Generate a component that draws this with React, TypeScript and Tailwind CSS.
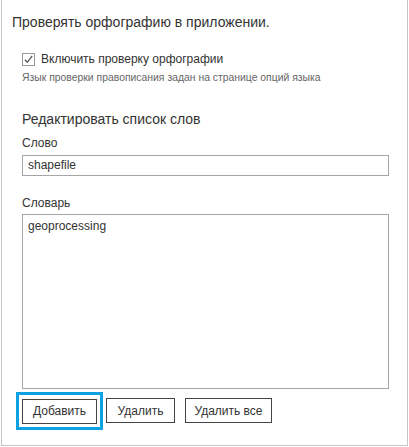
import React from "react";

export default function App() {
  return (
    <div
      className="w-[409px] h-[447px] bg-white text-[#333] overflow-hidden"
      style={{ fontFamily: '"Liberation Sans", Arial, sans-serif' }}
    >
      <div className="ml-px w-[407px] h-[446px] border-x border-b border-[#c6c6c6] flex flex-col">
        <h1 className="mt-[11px] ml-[10px] text-[14px] leading-[22px] text-[#333]">
          Проверять орфографию в приложении.
        </h1>

        <div className="mt-[18px] ml-[20px] flex flex-col">
          <label className="flex items-center gap-[6px] text-[12px] leading-[16px]">
            <span className="w-[13px] h-[13px] border border-[#9a9a9a] bg-white flex items-center justify-center">
              <svg width="11" height="11" viewBox="0 0 11 11">
                <path d="M2 5.8 L4.3 8.3 L9.2 1.8" fill="none" stroke="#555" strokeWidth="1.3" />
              </svg>
            </span>
            <span>Включить проверку орфографии</span>
          </label>
          <p className="mt-[4px] text-[10.4px] leading-[14px] text-[#666]">
            Язык проверки правописания задан на странице опций языка
          </p>
        </div>

        <div className="mt-[24px] ml-[20px] w-[367px] flex flex-col">
          <h2 className="text-[14px] leading-[20px]">Редактировать список слов</h2>
          <div className="mt-[6px] text-[12px] leading-[16px]">Слово</div>
          <div className="mt-[4px] h-[21px] border border-[#a6a6a6] px-[5px] text-[12px] leading-[19px]">
            shapefile
          </div>
          <div className="mt-[19px] text-[12px] leading-[16px]">Словарь</div>
          <div className="mt-[3px] h-[175px] border border-[#a6a6a6] px-[5px] pt-[2px] text-[12px] leading-[18px]">
            geoprocessing
          </div>
        </div>

        <div className="mt-[3px] ml-[14px] flex items-start">
          <div className="border-[3px] border-[#0ba1e2] p-[3px]">
            <button className="h-[25px] w-[75px] border border-[#444] bg-white text-[12px] text-[#333]">
              Добавить
            </button>
          </div>
          <button className="mt-[6px] ml-[3px] h-[25px] w-[69px] border border-[#444] bg-white text-[12px] text-[#333]">
            Удалить
          </button>
          <button className="mt-[6px] ml-[10px] h-[25px] w-[87px] border border-[#444] bg-white text-[12px] text-[#333]">
            Удалить все
          </button>
        </div>
      </div>
    </div>
  );
}
